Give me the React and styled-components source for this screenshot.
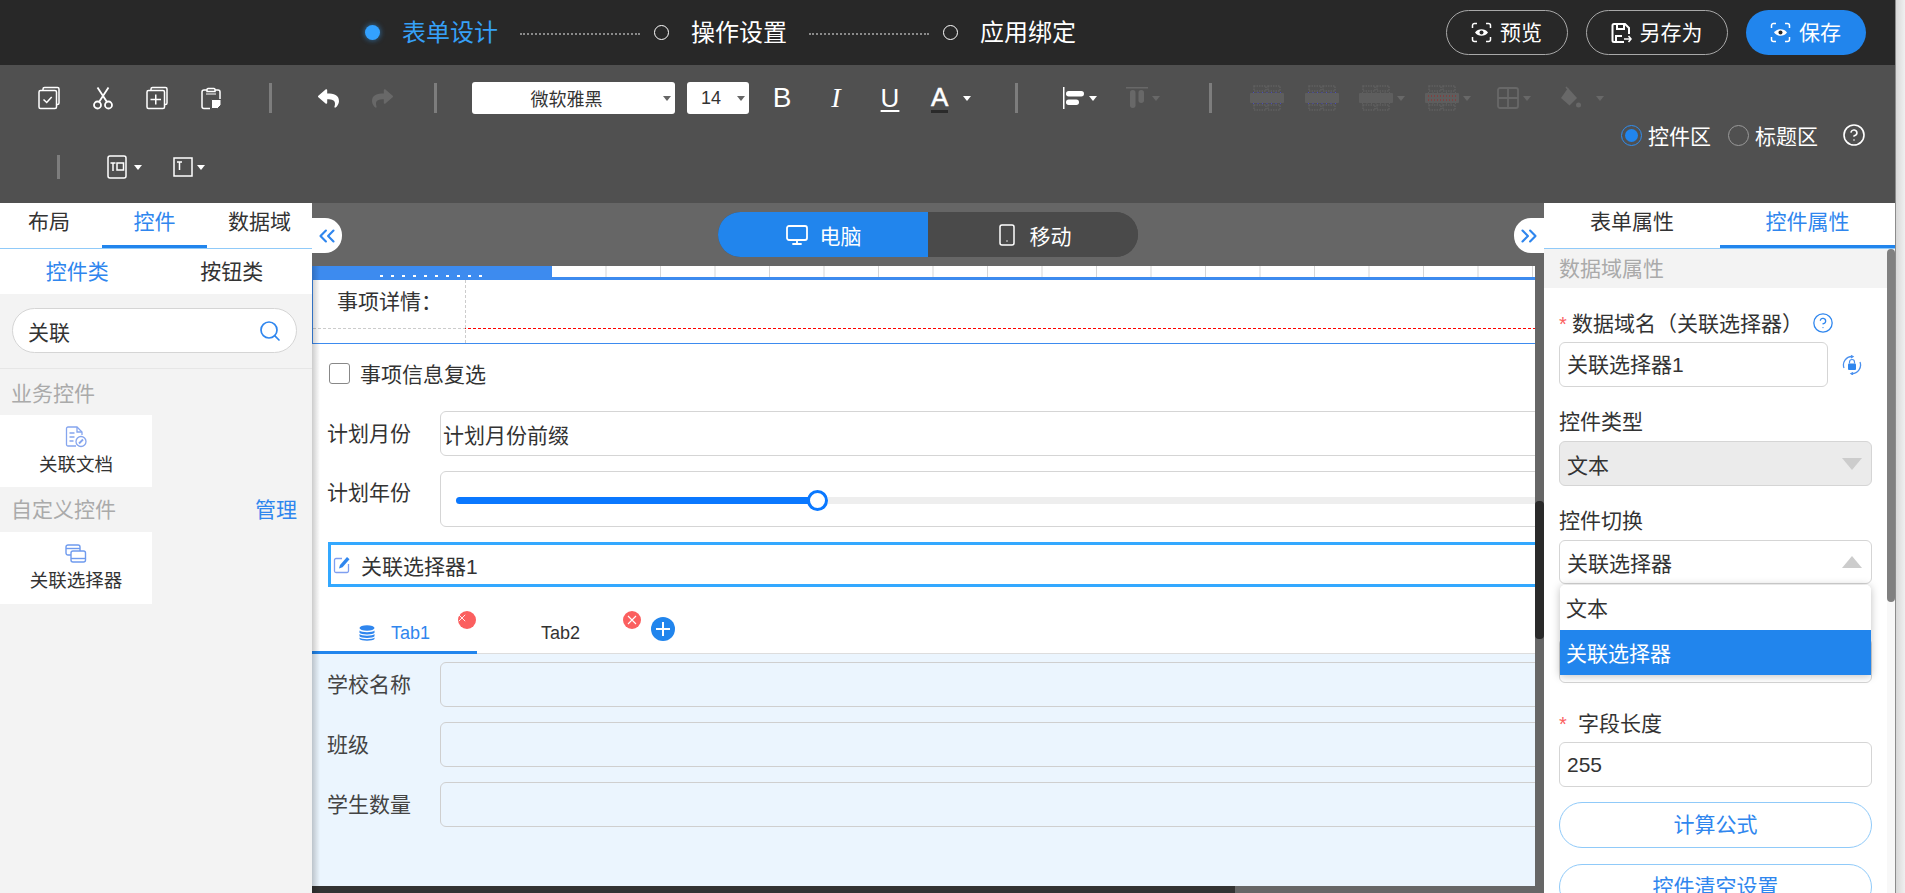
import React from 'react'
import styled, { createGlobalStyle, css } from 'styled-components'
import { ChevronsLeft, ChevronsRight, CircleHelp, Monitor, Search, Smartphone } from 'lucide-react'
import { FaReply, FaShare } from 'react-icons/fa'

const GlobalStyle = createGlobalStyle`
  * { box-sizing: border-box; }
  html, body { margin: 0; height: 100%; overflow: hidden; }
  body {
    font-family: "Liberation Sans", "Noto Sans CJK SC", sans-serif;
    font-size: 21px;
    color: #333;
    background: #fff;
  }
`

//============ icons

const IconEye = () => (
  <svg width="21" height="21" viewBox="0 0 21 21" fill="none" stroke="#fff" strokeWidth="1.5">
    <path d="M1.5 6V3.5a2 2 0 0 1 2-2H6M15 1.5h2.5a2 2 0 0 1 2 2V6M19.5 15v2.5a2 2 0 0 1-2 2H15M6 19.5H3.5a2 2 0 0 1-2-2V15" />
    <path d="M4 10.5c3-4.4 10-4.4 13 0-3 4.400-10 4.400-13 0z" fill="#fff" stroke="none" />
    <circle cx="10.500" cy="10.500" r="2" fill="#272727" stroke="none" />
  </svg>
)

const IconSaveAs = () => (
  <svg width="21" height="22" viewBox="0 0 21 22" fill="none" stroke="#fff" strokeWidth="2">
    <path d="M13 20H3a1.500 1.500 0 0 1-1.500-1.500v-15A1.500 1.500 0 0 1 3 2h11l4 4v6" />
    <path d="M6 2v5h7V2M5 20v-6h6" />
    <path d="M13 17h7M17.500 14l2.500 3-2.500 3" strokeWidth="1.600" />
  </svg>
)

const IconSelectAll = () => (
  <svg width="24" height="24" viewBox="0 0 24 24" fill="none" stroke="#fff" strokeWidth="1.500">
    <path d="M6 4V3a1.500 1.500 0 0 1 1.500-1.500h13A1.500 1.500 0 0 1 22 3v14a1.500 1.500 0 0 1-1.500 1.500H20" />
    <rect x="2" y="4.500" width="17.500" height="18" rx="1.500" />
    <path d="M6.500 13.500l3.200 3 5-5.500" />
  </svg>
)

const IconCut = () => (
  <svg width="24" height="24" viewBox="0 0 24 24" fill="none" stroke="#fff" strokeWidth="1.800">
    <circle cx="6.500" cy="19" r="3.500" />
    <circle cx="17.500" cy="19" r="3.500" />
    <path d="M8 16L17.500 1.500M16 16L6.500 1.500" />
  </svg>
)

const IconCopyAdd = () => (
  <svg width="24" height="24" viewBox="0 0 24 24" fill="none" stroke="#fff" strokeWidth="1.500">
    <path d="M6 4V3a1.500 1.500 0 0 1 1.500-1.500h13A1.500 1.500 0 0 1 22 3v14a1.500 1.500 0 0 1-1.500 1.500H20" />
    <rect x="2" y="4.500" width="17.500" height="18" rx="1.500" />
    <path d="M10.750 8.500v10M5.500 13.500h10.500" />
  </svg>
)

const IconPaste = () => (
  <svg width="24" height="24" viewBox="0 0 24 24" fill="none" stroke="#fff" strokeWidth="1.500">
    <path d="M11 22.500H5A2 2 0 0 1 3 20.500V6a2 2 0 0 1 2-2h14a2 2 0 0 1 2 2v7" />
    <path d="M8 5.500V3.500a1 1 0 0 1 1-1h6a1 1 0 0 1 1 1v2z" fill="#505050" />
    <path d="M7 8h10" strokeWidth="1" />
    <path d="M12.500 13.500h9.500v5.500l-3.500 3.500h-6z" fill="#fff" stroke="#505050" strokeWidth="1" />
  </svg>
)

const IconAlignLeft = () => (
  <svg width="24" height="24" viewBox="0 0 24 24" fill="#fff">
    <rect x="1" y="1" width="1.500" height="22" />
    <rect x="4" y="5" width="18" height="5.500" rx="2.700" />
    <rect x="4" y="13.500" width="13" height="5.500" rx="2.700" />
  </svg>
)

const IconAlignTop = () => (
  <svg width="24" height="24" viewBox="0 0 24 24" fill="#686868">
    <rect x="1" y="1" width="22" height="1.500" />
    <rect x="5" y="4" width="5.500" height="18" rx="2.700" />
    <rect x="13.500" y="4" width="5.500" height="13" rx="2.700" />
  </svg>
)

const IconMerge = ({ mark, arrow }) => (
  <svg width="36" height="26" viewBox="0 0 36 26" fill="none" stroke="#5f5f5f" strokeWidth="1.500" strokeDasharray="1.500 1">
    <rect x="5" y="1" width="12" height="5" />
    <rect x="19" y="1" width="12" height="5" />
    <rect x="5" y="20" width="12" height="5" />
    <rect x="19" y="20" width="12" height="5" />
    <rect x="1" y="8" width="34" height="10" rx="1" fill="#5e5e5e" stroke="none" />
    <path d="M4 7.500h28M4 18.500h28" stroke={mark} strokeWidth="1" strokeDasharray="1 3.500" />
    {arrow && <path d="M4 11h28M4 15h28" stroke={arrow} strokeWidth="1.500" strokeDasharray="1 2" />}
  </svg>
)

const IconGrid = () => (
  <svg width="24" height="24" viewBox="0 0 24 24" fill="none" stroke="#686868" strokeWidth="1.800">
    <rect x="2" y="2" width="20" height="20" rx="2" />
    <path d="M12 2v20M2 12h20" />
  </svg>
)

const IconBucket = () => (
  <svg width="24" height="24" viewBox="0 0 24 24" fill="#686868">
    <path d="M10 2l9 10-7.500 7.500L3 12z" />
    <path d="M8 1l2.500 3" stroke="#686868" strokeWidth="1.500" />
    <circle cx="20.500" cy="19" r="2.500" />
  </svg>
)

const IconCellH = () => (
  <svg width="20" height="24" viewBox="0 0 20 24" fill="none" stroke="#fff" strokeWidth="1.500">
    <rect x="1" y="1" width="18" height="22" rx="2" />
    <path d="M3.500 8h5M6 8v8" />
    <rect x="10" y="8" width="6.500" height="7" />
  </svg>
)

const IconCellT = () => (
  <svg width="20" height="20" viewBox="0 0 20 20" fill="none" stroke="#fff" strokeWidth="1.500">
    <rect x="1" y="1" width="18" height="18" />
    <path d="M4 5h5M6.500 5v8" />
  </svg>
)

const IconDoc = () => (
  <svg width="22" height="22" viewBox="0 0 22 22" fill="none" stroke="#85a5ee" strokeWidth="1.300">
    <path d="M11 20H3a1.500 1.500 0 0 1-1.500-1.500v-16A1.500 1.500 0 0 1 3 1h9l5 5v3" />
    <path d="M12 1v5h5M4.500 7h5M4.500 11h5M4.500 15h4" />
    <circle cx="16" cy="15.500" r="5" />
    <path d="M14 17.500l4-4" strokeWidth="1.800" />
  </svg>
)

const IconPicker = () => (
  <svg width="22" height="20" viewBox="0 0 22 20" fill="none" stroke="#6f9bee" strokeWidth="1.400">
    <rect x="1" y="1" width="14" height="10" rx="2" />
    <path d="M1 4.500h14" />
    <rect x="6" y="7" width="14.500" height="11" rx="2" fill="#fff" />
    <path d="M6 14.500h14.500" />
  </svg>
)

const IconEdit = () => (
  <svg width="18" height="18" viewBox="0 0 18 18" fill="none">
    <path d="M9 2.500H3A1.500 1.500 0 0 0 1.500 4v11A1.500 1.500 0 0 0 3 16.500h11a1.500 1.500 0 0 0 1.500-1.500V8" stroke="#7f9ff0" strokeWidth="1.300" />
    <path d="M6 12.500l1-3.500 7-8 2.500 2.200-7 8z" fill="#2f86ee" />
  </svg>
)

const IconStack = () => (
  <svg width="16" height="16" viewBox="0 0 16 16" fill="#2f86ee">
    <ellipse cx="8" cy="3" rx="7.500" ry="2.800" />
    <path d="M.5 5.500C2 7.800 14 7.800 15.500 5.500v2.300C14 10 2 10 .5 7.800zM.5 9C2 11.300 14 11.300 15.500 9v2.300C14 13.500 2 13.500 .5 11.300zM.5 12.500C2 14.800 14 14.800 15.500 12.500V14C14 16.200 2 16.200 .5 14z" />
  </svg>
)

const IconLockCycle = () => (
  <svg width="20" height="20" viewBox="0 0 20 20" fill="none" stroke="#4a90ee" strokeWidth="1.300">
    <path d="M2 13A8.500 8.500 0 0 1 10 1.500M18 7a8.500 8.500 0 0 1-8 11.500" />
    <path d="M9 .5l2 1-2 1.500M11 17.500l-2 1 2 1.500" />
    <rect x="6" y="8.500" width="8" height="6.500" rx="1" fill="#2f86ee" stroke="none" />
    <path d="M7.500 8.500V7a2.500 2.500 0 0 1 5 0v1.500" strokeWidth="1.200" />
  </svg>
)

const IconClose = () => (
  <svg width="10" height="10" viewBox="0 0 10 10" stroke="#fff" strokeWidth="1.100">
    <path d="M1 1l8 8M9 1l-8 8" />
  </svg>
)

//============ page

export default function App() {
  return (
    <Page>
      <GlobalStyle />
      <Workspace>
        <Header>
          <Stepper>
            <Dot $active />
            <StepLabel $active>表单设计</StepLabel>
            <Dash />
            <Dot />
            <StepLabel>操作设置</StepLabel>
            <Dash />
            <Dot />
            <StepLabel>应用绑定</StepLabel>
          </Stepper>
          <HeaderActions>
            <PillButton $w={122}><IconEye />预览</PillButton>
            <PillButton $w={142}><IconSaveAs />另存为</PillButton>
            <PillButton $w={120} $primary><IconEye />保存</PillButton>
          </HeaderActions>
        </Header>

        <Toolbar>
          <ToolRow>
            <ToolBtn><IconSelectAll /></ToolBtn>
            <ToolBtn><IconCut /></ToolBtn>
            <ToolBtn><IconCopyAdd /></ToolBtn>
            <ToolBtn><IconPaste /></ToolBtn>
            <Sep $l={31} $r={29} />
            <ToolBtn><FaReply size={21} color="#fff" /></ToolBtn>
            <ToolBtn><FaShare size={21} color="#686868" /></ToolBtn>
            <Sep $l={25} $r={35} />
            <FontSelect $w={203}><span>微软雅黑</span><Caret $dark /></FontSelect>
            <FontSelect $w={62} $ml={12}><span>14</span><Caret $dark /></FontSelect>
            <ToolBtn $ml={6}><Glyph $size={28}>B</Glyph></ToolBtn>
            <ToolBtn><Glyph $size={28} $italic>I</Glyph></ToolBtn>
            <ToolBtn><Glyph $size={26} $under>U</Glyph></ToolBtn>
            <DropBtn $w={48} $gap={13}>
              <ColorA>A</ColorA>
              <Caret />
            </DropBtn>
            <Sep $l={50} />
            <DropBtn $ml={44}><IconAlignLeft /><Caret /></DropBtn>
            <DropBtn $ml={26}><IconAlignTop /><Caret $off /></DropBtn>
            <Sep $l={47} />
            <DropBtn $ml={37}><IconMerge mark="#4a4ac0" /></DropBtn>
            <DropBtn $ml={19}><IconMerge mark="#4a4ac0" /></DropBtn>
            <DropBtn $ml={18}><IconMerge mark="#5f5f5f" /><Caret $off /></DropBtn>
            <DropBtn $ml={17}><IconMerge mark="#5f5f5f" arrow="#8a3a3a" /><Caret $off /></DropBtn>
            <DropBtn $ml={23}><IconGrid /><Caret $off /></DropBtn>
            <DropBtn $ml={25} $gap={12}><IconBucket /><Caret $off /></DropBtn>
          </ToolRow>

          <RadioRow>
            <RadioDot $on />
            <RadioText>控件区</RadioText>
            <RadioDot />
            <RadioText>标题区</RadioText>
            <CircleHelp size={24} color="#fff" strokeWidth={1.6} />
          </RadioRow>

          <ToolRowSmall>
            <Sep $h={24} />
            <DropBtn $ml={47} $gap={5}><IconCellH /><Caret /></DropBtn>
            <DropBtn $ml={29} $gap={2}><IconCellT /><Caret /></DropBtn>
          </ToolRowSmall>
        </Toolbar>

        <Body>
          <LeftPanel>
            <PanelTabs>
              <PanelTab $w={102} $shift={4}>布局</PanelTab>
              <PanelTab $w={105} $active>控件</PanelTab>
              <PanelTab $w={105}>数据域</PanelTab>
            </PanelTabs>
            <SubTabs>
              <SubTab $active>控件类</SubTab>
              <SubTab>按钮类</SubTab>
            </SubTabs>
            <LeftBody>
              <SearchBox>
                <span>关联</span>
                <Search size={24} color="#2f86ee" strokeWidth={1.7} />
              </SearchBox>
              <GroupHead $first>业务控件</GroupHead>
              <WidgetCard>
                <IconDoc />
                <span>关联文档</span>
              </WidgetCard>
              <GroupHead>
                自定义控件
                <ManageLink>管理</ManageLink>
              </GroupHead>
              <WidgetCard>
                <IconPicker />
                <span>关联选择器</span>
              </WidgetCard>
            </LeftBody>
          </LeftPanel>

          <CenterColumn>
            <DeviceBand>
              <CollapseLeft><ChevronsLeft size={26} color="#2f86ee" strokeWidth={2} /></CollapseLeft>
              <DeviceToggle>
                <DeviceBtn $active><Monitor size={24} strokeWidth={1.8} />电脑</DeviceBtn>
                <DeviceBtn><Smartphone size={24} strokeWidth={1.5} />移动</DeviceBtn>
              </DeviceToggle>
              <CollapseRight><ChevronsRight size={26} color="#2f86ee" strokeWidth={2} /></CollapseRight>
            </DeviceBand>

            <CanvasWrap>
              <Sheet>
                <Ruler><RulerFill /></Ruler>
                <DetailGrid>
                  <DetailLabel>事项详情：</DetailLabel>
                </DetailGrid>

                <CheckRow>
                  <CheckBox />
                  事项信息复选
                </CheckRow>

                <FormRow $top={23}>
                  <RowLabel>计划月份</RowLabel>
                  <RowInput>计划月份前缀</RowInput>
                </FormRow>

                <FormRow $top={15} $h={56} $start>
                  <RowLabel $h={44}>计划年份</RowLabel>
                  <RowInput>
                    <SliderTrack>
                      <SliderFill style={{ width: 361 }} />
                      <SliderThumb />
                    </SliderTrack>
                  </RowInput>
                </FormRow>

                <SelectedRow>
                  <IconEdit />
                  关联选择器1
                </SelectedRow>

                <TabBar>
                  <FormTab $active>
                    <IconStack />
                    Tab1
                    <TabClose><IconClose /></TabClose>
                  </FormTab>
                  <FormTab>
                    Tab2
                    <TabClose><IconClose /></TabClose>
                  </FormTab>
                  <TabAdd />
                </TabBar>

                <TabContent>
                  <FormRow>
                    <RowLabel $soft>学校名称</RowLabel>
                    <RowInput $clear />
                  </FormRow>
                  <FormRow $top={15}>
                    <RowLabel $soft>班级</RowLabel>
                    <RowInput $clear />
                  </FormRow>
                  <FormRow $top={15}>
                    <RowLabel $soft>学生数量</RowLabel>
                    <RowInput $clear />
                  </FormRow>
                </TabContent>

                <HScroll><HThumb /></HScroll>
              </Sheet>
              <VScroll><VThumb /></VScroll>
            </CanvasWrap>
          </CenterColumn>

          <RightPanel>
            <PanelTabs>
              <PanelTab $w={176}>表单属性</PanelTab>
              <PanelTab $w={175} $active>控件属性</PanelTab>
            </PanelTabs>
            <RightBody>
              <RightContent>
                <SectionHead>数据域属性</SectionHead>
                <Fields>
                  <Field $top={20}>
                    <FieldLabel>
                      <Star>*</Star>数据域名（关联选择器）
                      <CircleHelp size={22} color="#2f86ee" strokeWidth={1.4} />
                    </FieldLabel>
                    <InlineRow>
                      <TextInput $w={269}>关联选择器1</TextInput>
                      <IconLockCycle />
                    </InlineRow>
                  </Field>

                  <Field>
                    <FieldLabel $mb={5}>控件类型</FieldLabel>
                    <SelectBox $disabled>文本<Tri /></SelectBox>
                  </Field>

                  <Field>
                    <FieldLabel $mb={5}>控件切换</FieldLabel>
                    <DropAnchor>
                      <SelectBox $h={44}>关联选择器<Tri $up /></SelectBox>
                      <DropMenu>
                        <DropItem>文本</DropItem>
                        <DropItem $active>关联选择器</DropItem>
                      </DropMenu>
                    </DropAnchor>
                  </Field>

                  <HiddenSelect />

                  <Field $top={25}>
                    <FieldLabel>
                      <Star $wide>*</Star>字段长度
                    </FieldLabel>
                    <TextInput>255</TextInput>
                  </Field>

                  <OutlineBtn $top={15}>计算公式</OutlineBtn>
                  <OutlineBtn $top={16}>控件清空设置</OutlineBtn>
                </Fields>
              </RightContent>
              <RScroll><RThumb /></RScroll>
            </RightBody>
          </RightPanel>
        </Body>
      </Workspace>
      <PageScroll />
    </Page>
  )
}

//============ shell

const Page = styled.div`
  display: flex;
  width: 100vw;
  height: 100vh;
  overflow: hidden;
`
const Workspace = styled.div`
  flex: 1;
  min-width: 0;
  display: flex;
  flex-direction: column;
`
const PageScroll = styled.div`
  width: 10px;
  border-left: 1px solid #8c8c8c;
  background: linear-gradient(90deg, #d8d8d8, #f0f0f0);
`

//============ header

const Header = styled.header`
  height: 65px;
  flex: none;
  display: flex;
  align-items: center;
  background: #282828;
  padding: 0 29px 0 365px;
`
const Stepper = styled.div`
  display: flex;
  align-items: center;
`
const Dot = styled.span`
  width: 15px;
  height: 15px;
  border-radius: 50%;
  border: 1.5px solid #fff;
  ${p => p.$active && css`
    border: none;
    background: #33a1ff;
    box-shadow: 0 0 5px 1px rgba(51, 161, 255, .45);
  `}
`
const StepLabel = styled.span`
  margin-left: 22px;
  font-size: 24px;
  line-height: 32px;
  color: ${p => p.$active ? '#36a0f7' : '#fff'};
`
const Dash = styled.span`
  width: 120px;
  margin: 2px 14px 0 22px;
  border-top: 2px dotted #8a8a8a;
`
const HeaderActions = styled.div`
  margin-left: auto;
  display: flex;
  gap: 18px;
`
const PillButton = styled.button`
  width: ${p => p.$w}px;
  height: 45px;
  display: flex;
  align-items: center;
  justify-content: center;
  gap: 8px;
  padding: 0 1px 3px 0;
  border-radius: 23px;
  font: inherit;
  color: #fff;
  background: ${p => p.$primary ? '#2185ed' : 'transparent'};
  border: ${p => p.$primary ? 'none' : '1px solid #a8a8a8'};
  svg { margin-top: 3px; }
`

//============ toolbar

const Toolbar = styled.div`
  height: 138px;
  flex: none;
  background: #505050;
  padding-top: 17px;
`
const ToolRow = styled.div`
  height: 32px;
  display: flex;
  align-items: center;
  padding-left: 22px;
`
const ToolRowSmall = styled(ToolRow)`
  height: 26px;
  margin-top: 7px;
  padding-left: 57px;
`
const ToolBtn = styled.div`
  width: 54px;
  height: 32px;
  flex: none;
  margin-left: ${p => p.$ml || 0}px;
  display: flex;
  align-items: center;
  justify-content: center;
`
const DropBtn = styled.div`
  flex: none;
  margin-left: ${p => p.$ml || 0}px;
  ${p => p.$w && css`width: ${p.$w}px; padding-left: 14px;`}
  display: flex;
  align-items: center;
  gap: ${p => p.$gap ?? 1}px;
`
const Sep = styled.span`
  width: 3px;
  height: ${p => p.$h || 30}px;
  flex: none;
  margin-left: ${p => p.$l || 0}px;
  margin-right: ${p => p.$r || 0}px;
  background: #7d7d7d;
`
const Caret = styled.span`
  width: 12px;
  flex: none;
  display: flex;
  justify-content: center;
  &::after {
    content: '';
    border-left: 4px solid transparent;
    border-right: 4px solid transparent;
    border-top: 5px solid ${p => p.$dark ? '#666' : p.$off ? '#686868' : '#fff'};
  }
`
const FontSelect = styled.div`
  width: ${p => p.$w}px;
  height: 32px;
  flex: none;
  margin-left: ${p => p.$ml || 0}px;
  display: flex;
  align-items: center;
  background: #fff;
  border-radius: 3px;
  font-size: 18px;
  padding-right: 2px;
  span:first-child {
    flex: 1;
    text-align: center;
  }
`
const Glyph = styled.span`
  font-size: ${p => p.$size}px;
  line-height: 32px;
  color: #fff;
  ${p => p.$italic && css`font-style: italic; font-family: "Liberation Serif", serif;`}
  ${p => p.$under && css`text-decoration: underline; text-underline-offset: 3px;`}
`
const ColorA = styled.span`
  font-size: 26px;
  line-height: 26px;
  color: #fff;
  -webkit-text-stroke: .5px #fff;
  border-bottom: 3px solid #2a2a2a;
  height: 29px;
`
const RadioRow = styled.div`
  height: 24px;
  margin-top: 9px;
  display: flex;
  align-items: center;
  justify-content: flex-end;
  padding-right: 29px;
`
const RadioDot = styled.span`
  width: 21px;
  height: 21px;
  border-radius: 50%;
  border: 1.5px solid ${p => p.$on ? '#2f8ef0' : '#9a9a9a'};
  display: flex;
  align-items: center;
  justify-content: center;
  &::after {
    content: '';
    width: 13px;
    height: 13px;
    border-radius: 50%;
    background: ${p => p.$on ? '#2185ed' : 'transparent'};
  }
`
const RadioText = styled.span`
  margin: 0 17px 0 6px;
  font-size: 21px;
  color: #fff;
  &:nth-of-type(4) { margin-right: 24px; }
`

//============ body

const Body = styled.div`
  flex: 1;
  min-height: 0;
  display: flex;
`
const LeftPanel = styled.aside`
  width: 312px;
  flex: none;
  display: flex;
  flex-direction: column;
  background: #fff;
`
const PanelTabs = styled.div`
  height: 46px;
  flex: none;
  display: flex;
  background: #fff;
  border-bottom: 1px solid #90caf9;
`
const PanelTab = styled.div`
  width: ${p => p.$w}px;
  height: 45px;
  padding-right: ${p => p.$shift || 0}px;
  text-align: center;
  line-height: 38px;
  color: ${p => p.$active ? '#2f86ee' : '#333'};
  border-bottom: 3px solid ${p => p.$active ? '#2185ed' : 'transparent'};
`
const SubTabs = styled.div`
  height: 45px;
  flex: none;
  display: flex;
  padding-right: 3px;
`
const SubTab = styled.div`
  flex: 1;
  text-align: center;
  line-height: 46px;
  color: ${p => p.$active ? '#2f86ee' : '#333'};
`
const LeftBody = styled.div`
  flex: 1;
  background: #f3f3f3;
  padding-top: 14px;
`
const SearchBox = styled.div`
  width: 285px;
  height: 45px;
  margin-left: 12px;
  padding: 0 14px 0 15px;
  display: flex;
  align-items: center;
  justify-content: space-between;
  border: 1px solid #d5d5d5;
  border-radius: 23px;
  background: #fff;
`
const GroupHead = styled.div`
  height: ${p => p.$first ? 47 : 45}px;
  display: flex;
  align-items: center;
  justify-content: space-between;
  padding: 0 15px 4px 11px;
  color: #aaa;
  ${p => p.$first && css`
    margin-top: 15px;
    padding-bottom: 0;
    border-top: 1px solid #e6e6e6;
  `}
`
const ManageLink = styled.span`
  color: #2f86ee;
`
const WidgetCard = styled.div`
  width: 152px;
  height: 72px;
  padding-top: 2px;
  display: flex;
  flex-direction: column;
  align-items: center;
  justify-content: center;
  gap: 4px;
  background: #fff;
  font-size: 18.5px;
  span { line-height: 26px; }
`

//============ canvas

const CenterColumn = styled.main`
  flex: 1;
  min-width: 0;
  display: flex;
  flex-direction: column;
`
const DeviceBand = styled.div`
  height: 63px;
  flex: none;
  position: relative;
  display: flex;
  justify-content: center;
  padding-top: 9px;
  background: #666;
`
const collapseBtn = css`
  position: absolute;
  top: 15px;
  width: 30px;
  height: 35px;
  background: #fff;
  display: flex;
  align-items: center;
  justify-content: center;
`
const CollapseLeft = styled.span`
  ${collapseBtn}
  left: 0;
  border-radius: 0 17px 17px 0;
`
const CollapseRight = styled.span`
  ${collapseBtn}
  right: 0;
  border-radius: 17px 0 0 17px;
`
const DeviceToggle = styled.div`
  height: 45px;
  display: flex;
  border-radius: 23px;
  overflow: hidden;
  background: #4a4a4a;
`
const DeviceBtn = styled.div`
  width: 210px;
  display: flex;
  align-items: center;
  justify-content: center;
  gap: 11px;
  color: #fff;
  background: ${p => p.$active ? '#2185ed' : '#4a4a4a'};
`
const CanvasWrap = styled.div`
  flex: 1;
  min-height: 0;
  display: flex;
`
const Sheet = styled.div`
  flex: 1;
  min-width: 0;
  position: relative;
  display: flex;
  flex-direction: column;
  overflow: hidden;
  background: #fff;
  &::after {
    content: '';
    position: absolute;
    top: 0;
    bottom: 0;
    left: 0;
    width: 8px;
    background: linear-gradient(90deg, rgba(0, 0, 0, .2), transparent);
  }
`
const Ruler = styled.div`
  height: 11px;
  flex: none;
  background: linear-gradient(90deg, transparent 0 53.5px, #d5d5d5 53.5px 54.5px) 240px 0 / 54.5px 100%;
`
const RulerFill = styled.div`
  width: 240px;
  height: 11px;
  background:
    repeating-linear-gradient(90deg, #fff 0 3px, transparent 3px 11px) 68px 9px / 110px 2px no-repeat,
    #3d8bef;
`
const DetailGrid = styled.div`
  height: 67px;
  flex: none;
  border-top: 3px solid #3d8bef;
  border-bottom: 1px solid #3d8bef;
  border-left: 1px solid #3d8bef;
  position: relative;
  &::before {
    content: '';
    position: absolute;
    left: 152px;
    top: 0;
    bottom: 0;
    border-left: 1px dashed #ccc;
  }
  &::after {
    content: '';
    position: absolute;
    left: 0;
    right: 0;
    top: 48px;
    height: 1px;
    background:
      repeating-linear-gradient(90deg, #ccc 0 3px, #fff 3px 5px) 0 0 / 152px 1px no-repeat,
      repeating-linear-gradient(90deg, #f00 0 3px, #fff 3px 5px);
  }
`
const DetailLabel = styled.div`
  padding: 5px 0 0 24px;
  line-height: 34px;
  font-size: 21px;
`
const CheckRow = styled.label`
  height: 30px;
  flex: none;
  margin: 14px 0 0 17px;
  display: flex;
  align-items: center;
  gap: 10px;
`
const CheckBox = styled.span`
  width: 21px;
  height: 21px;
  border: 1.5px solid #888;
  border-radius: 3px;
`
const FormRow = styled.div`
  height: ${p => p.$h || 45}px;
  flex: none;
  margin-top: ${p => p.$top ?? 0}px;
  display: flex;
  align-items: ${p => p.$start ? 'flex-start' : 'center'};
  padding-left: 15px;
  margin-right: -12px;
`
const RowLabel = styled.div`
  width: 113px;
  flex: none;
  line-height: ${p => p.$h || 45}px;
  color: ${p => p.$soft ? '#444' : '#333'};
`
const RowInput = styled.div`
  flex: 1;
  height: 100%;
  display: flex;
  align-items: center;
  padding-left: 2px;
  border: 1px solid ${p => p.$clear ? '#cfcfcf' : '#d5d5d5'};
  border-radius: 6px;
`
const SliderTrack = styled.div`
  flex: 1;
  height: 7px;
  margin: 3px 0 0 13px;
  position: relative;
  background: #eee;
  border-radius: 4px;
  display: flex;
  align-items: center;
`
const SliderFill = styled.div`
  height: 7px;
  background: #0a78ff;
  border-radius: 4px;
`
const SliderThumb = styled.span`
  width: 21px;
  height: 21px;
  flex: none;
  margin-left: -10px;
  border-radius: 50%;
  background: #fff;
  border: 3px solid #0a78ff;
  z-index: 1;
`
const SelectedRow = styled.div`
  height: 45px;
  flex: none;
  margin: 15px -12px 0 16px;
  display: flex;
  align-items: center;
  gap: 10px;
  padding-left: 2px;
  border: 3px solid #33a8ff;
`
const TabBar = styled.div`
  height: 67px;
  flex: none;
  display: flex;
  align-items: stretch;
  border-bottom: 1px solid #ddd;
`
const FormTab = styled.div`
  width: 165px;
  position: relative;
  display: flex;
  align-items: flex-end;
  justify-content: center;
  gap: 6px;
  padding-left: ${p => p.$active ? 0 : 2}px;
  padding-bottom: ${p => p.$active ? 5 : 7}px;
  line-height: 26px;
  font-size: 18px;
  color: ${p => p.$active ? '#2f86ee' : '#333'};
  ${p => p.$active && css`
    border-bottom: 3px solid #2185ed;
    margin-bottom: -1px;
    svg:first-child { margin-bottom: 5px; margin-right: 10px; }
  `}
`
const TabClose = styled.span`
  position: absolute;
  top: 24px;
  right: 1px;
  width: 18px;
  height: 18px;
  border-radius: 50%;
  background: #fb5f5f;
  display: flex;
  align-items: center;
  justify-content: center;
`
const TabAdd = styled.span`
  width: 24px;
  height: 24px;
  margin: 30px 0 0 9px;
  border-radius: 50%;
  background:
    linear-gradient(#fff, #fff) center / 14px 2px no-repeat,
    linear-gradient(#fff, #fff) center / 2px 14px no-repeat,
    #2185ed;
`
const TabContent = styled.div`
  flex: 1;
  min-height: 0;
  padding-top: 8px;
  background: #ebf5fe;
`
const HScroll = styled.div`
  height: 7px;
  flex: none;
  background: #666;
`
const HThumb = styled.div`
  width: 923px;
  height: 7px;
  background: #333;
`
const VScroll = styled.div`
  width: 9px;
  flex: none;
  background: #666;
  padding-top: 235px;
`
const VThumb = styled.div`
  height: 138px;
  background: #2a2a2a;
  border-radius: 4px;
`

//============ right panel

const RightPanel = styled.aside`
  width: 351px;
  flex: none;
  display: flex;
  flex-direction: column;
  background: #fff;
`
const RightBody = styled.div`
  flex: 1;
  min-height: 0;
  display: flex;
`
const RightContent = styled.div`
  flex: 1;
  min-width: 0;
  overflow: hidden;
`
const RScroll = styled.div`
  width: 8px;
  flex: none;
  background: #f8f8f8;
`
const RThumb = styled.div`
  height: 353px;
  background: #808080;
  border-radius: 4px;
`
const SectionHead = styled.div`
  height: 39px;
  padding-left: 15px;
  line-height: 39px;
  color: #aaa;
  background: #f3f3f3;
`
const Fields = styled.div`
  padding: 0 15px;
`
const Field = styled.div`
  margin-top: ${p => p.$top ?? 19}px;
`
const FieldLabel = styled.div`
  height: 30px;
  padding-top: 2px;
  margin-bottom: ${p => p.$mb ?? 4}px;
  display: flex;
  align-items: center;
  line-height: 28px;
  svg { margin: -3px 0 0 9px; }
`
const Star = styled.span`
  width: ${p => p.$wide ? 19 : 13}px;
  color: #fb5f5f;
  font-size: 20px;
`
const InlineRow = styled.div`
  display: flex;
  align-items: center;
  gap: 14px;
`
const TextInput = styled.div`
  width: ${p => p.$w ? `${p.$w}px` : '100%'};
  height: 45px;
  padding-left: 7px;
  line-height: 43px;
  border: 1px solid #d5d5d5;
  border-radius: 6px;
`
const SelectBox = styled.div`
  height: ${p => p.$h || 45}px;
  display: flex;
  align-items: center;
  justify-content: space-between;
  padding: 0 9px 0 7px;
  border: 1px solid #d5d5d5;
  border-radius: 6px;
  background: ${p => p.$disabled ? '#ebebeb' : '#fff'};
`
const Tri = styled.span`
  border-left: 10px solid transparent;
  border-right: 10px solid transparent;
  ${p => p.$up ? 'border-bottom' : 'border-top'}: 12px solid #ccc;
`
const DropAnchor = styled.div`
  position: relative;
`
const DropMenu = styled.div`
  position: absolute;
  z-index: 2;
  top: calc(100% + 1px);
  left: 1px;
  right: 1px;
  background: #fff;
  border-radius: 5px 5px 0 0;
  overflow: hidden;
  box-shadow: 0 1px 8px rgba(0, 0, 0, .25);
`
const DropItem = styled.div`
  height: 45px;
  padding-left: 6px;
  line-height: 47px;
  color: ${p => p.$active ? '#fff' : '#333'};
  background: ${p => p.$active ? '#2185ed' : '#fff'};
`
const HiddenSelect = styled.div`
  height: 45px;
  margin-top: 54px;
  border: 1px solid #d5d5d5;
  border-radius: 6px;
`
const OutlineBtn = styled.div`
  height: 46px;
  margin-top: ${p => p.$top}px;
  text-align: center;
  line-height: 44px;
  color: #2f86ee;
  border: 1px solid #90caf9;
  border-radius: 23px;
`
